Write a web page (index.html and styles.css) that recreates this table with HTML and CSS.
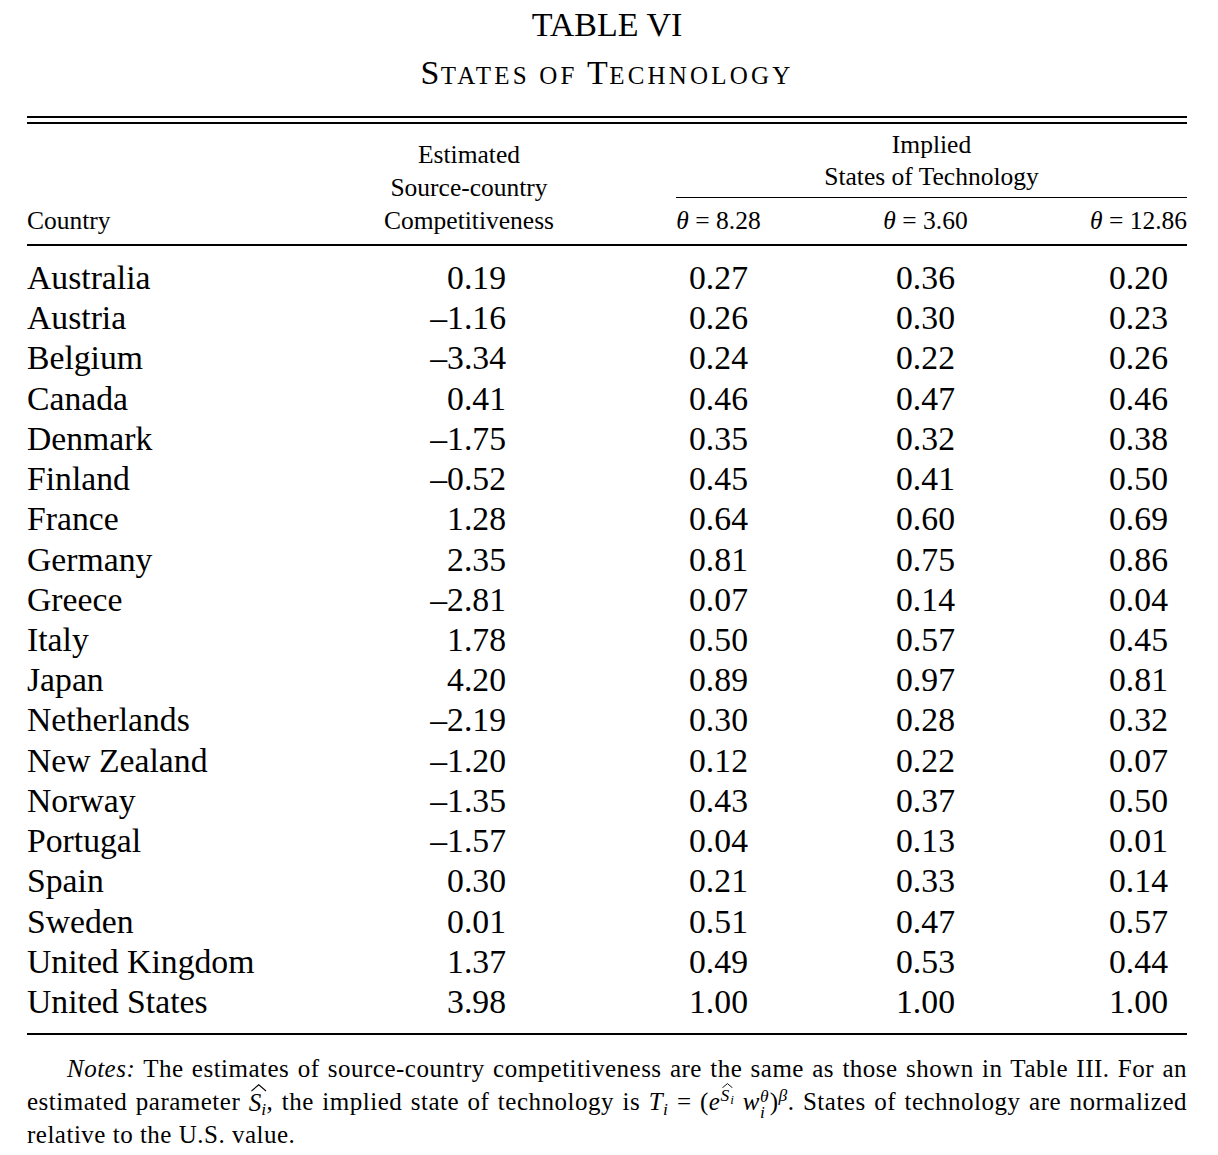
FILE: index.html
```html
<!DOCTYPE html>
<html lang="en">
<head>
<meta charset="utf-8">
<title>Table VI – States of Technology</title>
<link rel="stylesheet" href="styles.css">
</head>
<body>
<div class="page">
  <h1 class="title">TABLE VI</h1>
  <h2 class="subtitle">S<span class="sc">TATES OF</span> T<span class="sc">ECHNOLOGY</span></h2>
  <div class="rule-double"></div>

  <div class="thead">
    <div class="h-country">Country</div>
    <div class="h-est">Estimated<br>Source-country<br>Competitiveness</div>
    <div class="h-implied">Implied<br>States of Technology</div>
    <div class="h-theta c3"><i>θ</i> = 8.28</div>
    <div class="h-theta c4"><i>θ</i> = 3.60</div>
    <div class="h-theta c5"><i>θ</i> = 12.86</div>
  </div>

  <div class="tbody">
    <div class="row"><span class="name">Australia</span><span class="est">0.19</span><span class="val">0.27</span><span class="val">0.36</span><span class="val">0.20</span></div>
    <div class="row"><span class="name">Austria</span><span class="est">–1.16</span><span class="val">0.26</span><span class="val">0.30</span><span class="val">0.23</span></div>
    <div class="row"><span class="name">Belgium</span><span class="est">–3.34</span><span class="val">0.24</span><span class="val">0.22</span><span class="val">0.26</span></div>
    <div class="row"><span class="name">Canada</span><span class="est">0.41</span><span class="val">0.46</span><span class="val">0.47</span><span class="val">0.46</span></div>
    <div class="row"><span class="name">Denmark</span><span class="est">–1.75</span><span class="val">0.35</span><span class="val">0.32</span><span class="val">0.38</span></div>
    <div class="row"><span class="name">Finland</span><span class="est">–0.52</span><span class="val">0.45</span><span class="val">0.41</span><span class="val">0.50</span></div>
    <div class="row"><span class="name">France</span><span class="est">1.28</span><span class="val">0.64</span><span class="val">0.60</span><span class="val">0.69</span></div>
    <div class="row"><span class="name">Germany</span><span class="est">2.35</span><span class="val">0.81</span><span class="val">0.75</span><span class="val">0.86</span></div>
    <div class="row"><span class="name">Greece</span><span class="est">–2.81</span><span class="val">0.07</span><span class="val">0.14</span><span class="val">0.04</span></div>
    <div class="row"><span class="name">Italy</span><span class="est">1.78</span><span class="val">0.50</span><span class="val">0.57</span><span class="val">0.45</span></div>
    <div class="row"><span class="name">Japan</span><span class="est">4.20</span><span class="val">0.89</span><span class="val">0.97</span><span class="val">0.81</span></div>
    <div class="row"><span class="name">Netherlands</span><span class="est">–2.19</span><span class="val">0.30</span><span class="val">0.28</span><span class="val">0.32</span></div>
    <div class="row"><span class="name">New Zealand</span><span class="est">–1.20</span><span class="val">0.12</span><span class="val">0.22</span><span class="val">0.07</span></div>
    <div class="row"><span class="name">Norway</span><span class="est">–1.35</span><span class="val">0.43</span><span class="val">0.37</span><span class="val">0.50</span></div>
    <div class="row"><span class="name">Portugal</span><span class="est">–1.57</span><span class="val">0.04</span><span class="val">0.13</span><span class="val">0.01</span></div>
    <div class="row"><span class="name">Spain</span><span class="est">0.30</span><span class="val">0.21</span><span class="val">0.33</span><span class="val">0.14</span></div>
    <div class="row"><span class="name">Sweden</span><span class="est">0.01</span><span class="val">0.51</span><span class="val">0.47</span><span class="val">0.57</span></div>
    <div class="row"><span class="name">United Kingdom</span><span class="est">1.37</span><span class="val">0.49</span><span class="val">0.53</span><span class="val">0.44</span></div>
    <div class="row"><span class="name">United States</span><span class="est">3.98</span><span class="val">1.00</span><span class="val">1.00</span><span class="val">1.00</span></div>
  </div>

  <p class="notes"><i>Notes:</i> The estimates of source-country competitiveness are the same as those shown in Table III. For an estimated parameter <span class="hat"><svg class="hat-mark" viewBox="0 0 16 7" preserveAspectRatio="none"><path d="M0.5 6.5 L8 0.8 L15.5 6.5" fill="none" stroke="#000" stroke-width="1.1"/></svg><i>S</i></span><sub><i>i</i></sub>, the implied state of technology is <i>T</i><sub><i>i</i></sub> = (<i>e</i><sup class="exp"><span class="hat"><svg class="hat-mark" viewBox="0 0 16 7" preserveAspectRatio="none"><path d="M0.5 6.5 L8 0.8 L15.5 6.5" fill="none" stroke="#000" stroke-width="1.3"/></svg><i>S</i></span><i class="exp-sub">i</i></sup>&nbsp;<i>w</i><span class="stack"><i class="st-top">θ</i><i class="st-bot">i</i></span>)<sup><i>β</i></sup>. States of technology are normalized relative to the U.S. value.</p>
</div>
</body>
</html>
```

FILE: styles.css
```css
html, body {
  margin: 0;
  padding: 0;
  background: #fff;
}

body {
  font-family: "Liberation Serif", "Times New Roman", serif;
  color: #000;
}

.page {
  width: 1160px;
  margin-left: 27px;
  padding-top: 5px;
}

.title {
  margin: 0;
  font-size: 34px;
  line-height: 40px;
  font-weight: normal;
  text-align: center;
}

.subtitle {
  margin: 8px 0 0;
  font-size: 34px;
  line-height: 40px;
  font-weight: normal;
  text-align: center;
  letter-spacing: 1.5px;
}

.subtitle .sc {
  font-size: 25px;
  letter-spacing: 3.2px;
}

.rule-double {
  margin-top: 20px;
  height: 4px;
  border-top: 2px solid #000;
  border-bottom: 2px solid #000;
}

.thead,
.row {
  display: grid;
  grid-template-columns: 235px 170px 85px 85px 97px;
  column-gap: 122px;
}

.thead {
  grid-template-rows: auto auto;
  padding: 5px 0 7px;
  border-bottom: 2px solid #000;
  font-size: 25.5px;
}

.h-country {
  grid-column: 1;
  grid-row: 1 / 3;
  align-self: end;
  line-height: 33px;
  white-space: nowrap;
}

.h-est {
  grid-column: 2;
  grid-row: 1 / 3;
  align-self: end;
  text-align: center;
  line-height: 33px;
  white-space: nowrap;
}

.h-implied {
  grid-column: 3 / 6;
  grid-row: 1;
  text-align: center;
  line-height: 32px;
  padding-bottom: 4px;
  border-bottom: 1px solid #000;
}

.h-theta {
  grid-row: 2;
  margin-top: 6px;
  line-height: 33px;
  text-align: center;
  white-space: nowrap;
}

.h-theta.c3 { grid-column: 3; }
.h-theta.c4 { grid-column: 4; }
.h-theta.c5 { grid-column: 5; text-align: right; }

.tbody {
  padding: 12px 0 11px;
  border-bottom: 2px solid #000;
  font-size: 33.7px;
}

.row {
  line-height: 40.22px;
}

.name {
  white-space: nowrap;
}

.est {
  text-align: right;
  padding-right: 48px;
}

.val {
  text-align: center;
}

.notes {
  margin: 19px 0 0;
  font-size: 25px;
  line-height: 29px;
  text-align: justify;
  text-indent: 40px;
  letter-spacing: 0.5px;
}

.notes sub,
.notes sup {
  font-size: 0.7em;
  line-height: 0;
}

.notes sub {
  vertical-align: -0.25em;
}

.notes sup {
  vertical-align: 0.55em;
}

.hat {
  display: inline-block;
  line-height: 1;
  text-indent: 0;
  letter-spacing: 0;
}

.hat-mark {
  display: block;
  width: 0.62em;
  height: 0.3em;
  margin: 0 -0.22em -0.08em 0.1em;
}

.exp-sub {
  font-size: 0.75em;
  vertical-align: -0.2em;
  margin-left: 1px;
}

.stack {
  display: inline-block;
  vertical-align: -0.4em;
  font-size: 0.7em;
  line-height: 0.9;
  text-indent: 0;
  letter-spacing: 0;
  margin-right: 1px;
}

.stack i {
  display: block;
}
```
